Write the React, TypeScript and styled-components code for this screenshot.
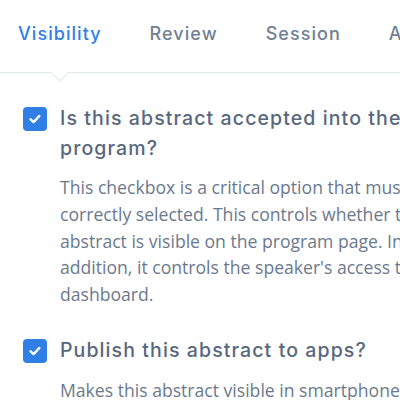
import React from "react";
import styled, { createGlobalStyle } from "styled-components";

const GlobalStyle = createGlobalStyle`
  html, body {
    margin: 0;
    padding: 0;
    background: #ffffff;
  }
  body {
    overflow: hidden;
    width: 400px;
    height: 400px;
  }
`;

const Page = styled.div`
  width: 400px;
  height: 400px;
  overflow: hidden;
  font-family: "Open Sans", "Noto Sans", sans-serif;
`;

const TabBar = styled.div`
  display: flex;
  gap: 48px;
  padding: 0 0 0 18px;
  height: 72px;
  border-bottom: 1.5px solid #e1e6ee;
  white-space: nowrap;
`;

const Tab = styled.div<{ $active?: boolean }>`
  position: relative;
  padding-top: 23.5px;
  font-family: "Inter", "Noto Sans", sans-serif;
  font-size: 18px;
  line-height: 20px;
  letter-spacing: 1.05px;
  font-weight: 500;
  color: ${(p) => (p.$active ? "#2f7ee8" : "#717f93")};
`;

const Notch = styled.span`
  position: absolute;
  left: 35px;
  top: 66px;
  width: 13.4px;
  height: 13.4px;
  box-sizing: border-box;
  background: #ffffff;
  border-right: 1.5px solid #e1e6ee;
  border-bottom: 1.5px solid #e1e6ee;
  transform: rotate(45deg);
`;

const Content = styled.div`
  padding: 30px 0 0 23px;
`;

const Option = styled.div`
  display: grid;
  grid-template-columns: 24px 410px;
  column-gap: 13px;
  margin-bottom: 27.6px;
`;

const Box = styled.div`
  width: 24px;
  height: 24px;
  border-radius: 4px;
  background: #2f7fe6;
  display: flex;
  align-items: center;
  justify-content: center;
  margin-top: 4px;
`;

const Title = styled.div`
  font-family: "Inter", "Noto Sans", sans-serif;
  font-size: 19.5px;
  font-weight: 500;
  line-height: 30px;
  color: #58677e;
  letter-spacing: 1.1px;
`;

const Body = styled.p`
  grid-column: 2;
  margin: 11.3px 0 0;
  font-size: 17.6px;
  line-height: 26.7px;
  color: #6b798e;
`;

const Check = () => (
  <svg width="14" height="14" viewBox="0 0 14 14" fill="none">
    <path
      d="M2.6 7.3 L5.6 10.1 L11.4 3.9"
      stroke="#ffffff"
      strokeWidth="2.4"
      strokeLinecap="round"
      strokeLinejoin="round"
    />
  </svg>
);

const App = () => (
  <Page>
    <GlobalStyle />
    <TabBar>
      <Tab $active>
        Visibility
        <Notch />
      </Tab>
      <Tab>Review</Tab>
      <Tab>Session</Tab>
      <Tab>Authors</Tab>
    </TabBar>
    <Content>
      <Option>
        <Box>
          <Check />
        </Box>
        <Title>Is this abstract accepted into the program?</Title>
        <Body>
          This checkbox is a critical option that must be correctly selected.
          This controls whether the abstract is visible on the program page. In
          addition, it controls the speaker's access to their dashboard.
        </Body>
      </Option>
      <Option>
        <Box>
          <Check />
        </Box>
        <Title>Publish this abstract to apps?</Title>
        <Body>
          Makes this abstract visible in smartphone apps and on the event
          website.
        </Body>
      </Option>
    </Content>
  </Page>
);

export default App;
